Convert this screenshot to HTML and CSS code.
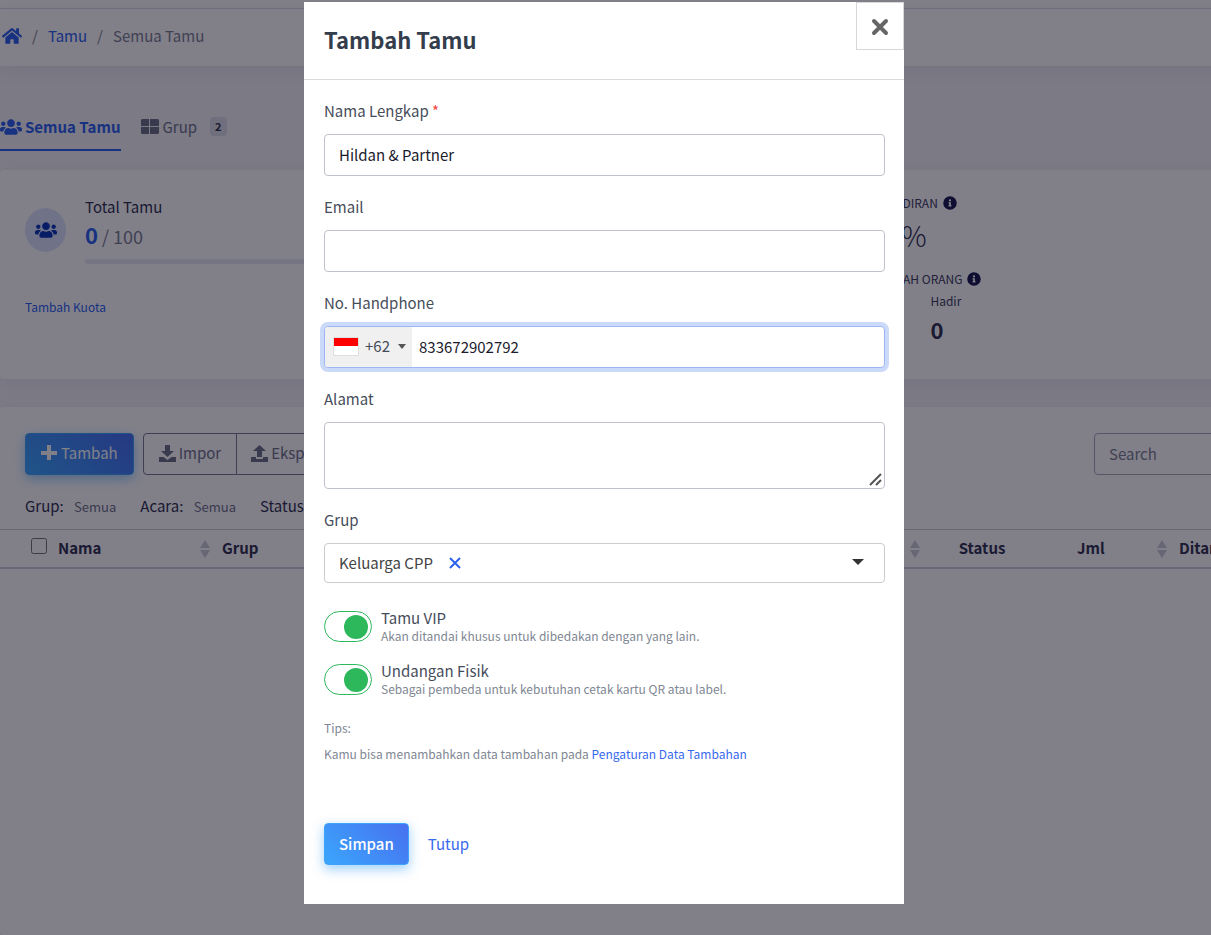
FILE: index.html
```html
<!DOCTYPE html>
<html lang="id">
<head>
  <meta charset="UTF-8" />
  <meta name="viewport" content="width=device-width, initial-scale=1.0" />
  <title>Tambah Tamu</title>
  <link rel="stylesheet" href="styles.css">
</head>
<body>
  <!-- icon dipakai ulang -->
  <svg class="sprite" aria-hidden="true">
    <symbol id="i-users" viewBox="0 0 640 512"><path d="M96 224c35 0 64-29 64-64s-29-64-64-64-64 29-64 64 29 64 64 64zm448 0c35 0 64-29 64-64s-29-64-64-64-64 29-64 64 29 64 64 64zm32 32h-64c-18 0-34 7-45 19 40 22 69 62 75 109h66c18 0 32-14 32-32v-32c0-35-29-64-64-64zm-256 0c62 0 112-50 112-112S382 32 320 32 208 82 208 144s50 112 112 112zm77 32h-8c-21 10-44 16-69 16s-48-6-69-16h-8c-64 0-115 52-115 115v29c0 27 21 48 48 48h288c27 0 48-21 48-48v-29c0-63-51-115-115-115zm-224-13c-11-12-27-19-45-19H64c-35 0-64 29-64 64v32c0 18 14 32 32 32h66c6-47 35-87 75-109z"/></symbol>
    <symbol id="i-info" viewBox="0 0 512 512"><path d="M256 8a248 248 0 1 0 0 496 248 248 0 0 0 0-496zm0 110a42 42 0 1 1 0 84 42 42 0 0 1 0-84zm56 254c0 7-5 12-12 12h-88c-7 0-12-5-12-12v-24c0-7 5-12 12-12h12v-64h-12c-7 0-12-5-12-12v-24c0-7 5-12 12-12h64c7 0 12 5 12 12v100h12c7 0 12 5 12 12z"/></symbol>
    <symbol id="i-sort" viewBox="0 0 10 18"><path d="M5 0l5 8H0zM5 18l5-8H0z"/></symbol>
  </svg>

  <div class="page">
    <div class="topbar"></div>
    <nav class="breadcrumb">
      <a href="#" aria-label="Beranda"><svg width="20" height="18" viewBox="0 0 576 512"><path d="M280 148L96 300v164c0 9 7 16 16 16l112-1c9 0 16-7 16-16v-95c0-9 7-16 16-16h64c9 0 16 7 16 16v95c0 9 7 16 16 16l112 1c9 0 16-7 16-16V300L296 148c-5-4-11-4-16 0zm292 103l-84-69V44c0-7-5-12-12-12h-56c-7 0-12 5-12 12v72l-90-73c-18-15-43-15-61 0L4 251c-5 4-6 12-2 17l26 31c4 5 12 6 17 2l235-194c5-3 11-3 16 0l235 194c5 4 13 3 17-2l26-31c4-5 3-13-2-17z"/></svg></a>
      <span>/</span>
      <a href="#">Tamu</a>
      <span>/</span>
      <span>Semua Tamu</span>
    </nav>

    <div class="tabs">
      <a href="#" class="tab active"><svg width="22" height="18"><use href="#i-users"/></svg>Semua Tamu</a>
      <a href="#" class="tab"><svg width="18" height="15" viewBox="0 0 18 15"><path d="M1 0h7v7H0V1zM9 0h8l1 1v6H9zM0 8h8v7H1l-1-1zM9 8h9v6l-1 1H9z"/></svg>Grup <span class="badge">2</span></a>
    </div>

    <section class="card summary">
      <div>
        <div class="quota">
          <span class="quota-icon"><svg width="22" height="18"><use href="#i-users"/></svg></span>
          <div class="quota-info">
            <div>Total Tamu</div>
            <div class="quota-count"><b>0</b> / 100</div>
            <div class="bar"></div>
          </div>
        </div>
        <a href="#" class="add-quota">Tambah Kuota</a>
      </div>
      <div class="stats">
        <div class="stat-title">KEHADIRAN <svg width="14" height="14"><use href="#i-info"/></svg></div>
        <div class="percent">00%</div>
        <div class="stat-title">JUMLAH ORANG <svg width="14" height="14"><use href="#i-info"/></svg></div>
        <div class="people">
          <div>Total<b>0</b></div>
          <div>Hadir<b>0</b></div>
        </div>
      </div>
    </section>

    <section class="card guests">
      <div class="toolbar">
        <button type="button" class="btn btn-primary"><svg width="16" height="16" viewBox="0 0 16 16"><path d="M6 0h4v6h6v4h-6v5H6v-5H0V6h6z"/></svg>Tambah</button>
        <div class="btn-group">
          <button type="button" class="btn"><svg width="17" height="17" viewBox="0 0 17 17"><path d="M6 0h5v6h4l-6.500 6L2 6h4zM0 12h4.500l4 3 4-3H17v5H0z"/></svg>Impor</button>
          <button type="button" class="btn"><svg width="17" height="17" viewBox="0 0 17 17"><path d="M6 12h5V6h4L8.500 0 2 6h4zM0 12h5v2h7v-2h5v5H0z"/></svg>Ekspor</button>
        </div>
        <input type="search" class="input search" placeholder="Search" aria-label="Search">
      </div>
      <div class="filters">
        <div>Grup: <a href="#">Semua</a></div>
        <div>Acara: <a href="#">Semua</a></div>
        <div>Status: <a href="#">Semua</a></div>
      </div>
      <table>
        <thead>
          <tr>
            <th class="c-check"><input type="checkbox" aria-label="Pilih semua"></th>
            <th class="c-name">Nama <svg class="sort"><use href="#i-sort"/></svg></th>
            <th>Grup <svg class="sort"><use href="#i-sort"/></svg></th>
            <th class="c-status">Status</th>
            <th class="c-jml">Jml <svg class="sort"><use href="#i-sort"/></svg></th>
            <th class="c-added">Ditambahkan</th>
          </tr>
        </thead>
      </table>
    </section>
  </div>

  <div class="backdrop">
    <div class="modal" role="dialog" aria-modal="true" aria-labelledby="modalTitle">
      <div class="modal-header">
        <h4 id="modalTitle">Tambah Tamu</h4>
        <button type="button" class="close" aria-label="Tutup dialog"><svg width="18" height="18" viewBox="0 0 18 18"><path d="M3 3l12 12M15 3L3 15"/></svg></button>
      </div>
      <form class="modal-body">
        <div class="group">
          <label for="nama">Nama Lengkap <span class="required">*</span></label>
          <input type="text" id="nama" class="input" value="Hildan &amp; Partner">
        </div>
        <div class="group">
          <label for="email">Email</label>
          <input type="email" id="email" class="input">
        </div>
        <div class="group">
          <label for="phone">No. Handphone</label>
          <div class="input phone">
            <button type="button" class="country" aria-label="Kode negara +62"><span class="flag"></span>+62<span class="caret"></span></button>
            <input type="tel" id="phone" value="833672902792">
          </div>
        </div>
        <div class="group">
          <label for="alamat">Alamat</label>
          <div class="area">
            <textarea id="alamat" class="input"></textarea>
            <svg class="grip" width="13" height="13" viewBox="0 0 13 13"><path d="M1 12L12 1M7 12l5-5"/></svg>
          </div>
        </div>
        <div class="group">
          <label for="grup">Grup</label>
          <div class="select">
            <select id="grup">
              <option>Keluarga CPP</option>
            </select>
            <button type="button" class="clear" aria-label="Hapus grup"><svg width="12" height="12" viewBox="0 0 12 12"><path d="M1 1l10 10M11 1L1 11"/></svg></button>
          </div>
        </div>

        <div class="switches">
          <div class="switch">
            <input type="checkbox" id="vip" checked>
            <label for="vip">Tamu VIP <small>Akan ditandai khusus untuk dibedakan dengan yang lain.</small></label>
          </div>
          <div class="switch">
            <input type="checkbox" id="fisik" checked>
            <label for="fisik">Undangan Fisik <small>Sebagai pembeda untuk kebutuhan cetak kartu QR atau label.</small></label>
          </div>
        </div>

        <div class="tips">
          <p>Tips:</p>
          <p>Kamu bisa menambahkan data tambahan pada <a href="#">Pengaturan Data Tambahan</a></p>
        </div>

        <div class="actions">
          <button type="submit" class="btn btn-primary">Simpan</button>
          <button type="button" class="btn-link">Tutup</button>
        </div>
      </form>
    </div>
  </div>
</body>
</html>
```
FILE: styles.css
```css
* { box-sizing: border-box; }
body {
  margin: 0;
  height: 100vh;
  overflow: hidden;
  font-family: "Noto Sans CJK SC", sans-serif;
  font-size: 15px;
  line-height: 22px;
  color: #323250;
  background: #fff;
}
a { color: #2c62ee; text-decoration: none; }
button, input, select, textarea { font: inherit; color: inherit; }
svg { fill: currentColor; flex-shrink: 0; }
.sprite { display: none; }

/* halaman di belakang modal, lebih lebar dari jendela */
.page { width: calc(100% + 109px); min-height: 100vh; background: #f2f2f6; display: flex; flex-direction: column; }
.topbar { height: 9px; background: #fff; border-bottom: 1px solid #dcdde8; }
.breadcrumb {
  display: flex;
  align-items: center;
  gap: 10px;
  height: 57px;
  padding: 0 2px 4px;
  background: #fff;
  color: #7d7f92;
  box-shadow: 0 2px 20px rgba(40, 40, 70, .08);
}
.breadcrumb svg { display: block; }
.tabs { display: flex; gap: 20px; height: 104px; padding-top: 46px; }
.tab { display: flex; align-items: center; gap: 4px; height: 39px; padding-bottom: 10px; color: #71728a; }
.tab.active { gap: 3px; padding-bottom: 8px; font-weight: bold; color: #2c62ee; border-bottom: 2px solid #2c62ee; }
.badge { margin-left: 9px; padding: 0 5px; border-radius: 4px; background: #dcdce6; color: #333348; font-size: 11px; font-weight: bold; line-height: 19px; }

.card { background: #fff; border-radius: 4px; box-shadow: 0 4px 20px rgba(40, 40, 70, .06); padding: 26px 25px; }
.summary { display: grid; grid-template-columns: 2fr 1fr; height: 209px; margin-bottom: 28px; }
.quota { display: flex; align-items: center; gap: 19px; }
.quota-icon { display: flex; align-items: center; justify-content: center; width: 41px; height: 44px; border-radius: 50%; background: #dde4fc; color: #0b3ab8; }
.quota-info { flex: 1; }
.quota-count { font-size: 18px; line-height: 33px; color: #7d7f92; }
.quota-count b { font-size: 22px; color: #2c62ee; }
.bar { width: 60%; height: 5px; margin-top: 6px; border-radius: 3px; background: #e9e9f2; }
.add-quota { display: inline-block; margin-top: 32px; font-size: 12px; }
.stats { line-height: 20px; }
.stat-title { display: flex; align-items: center; gap: 5px; font-size: 12px; line-height: 14px; color: #40405c; }
.stat-title svg { color: #1b1b50; }
.percent { margin: 4px 0 16px; font-size: 28px; font-weight: 300; line-height: 42px; }
.people { display: flex; gap: 31px; margin-top: 5px; font-size: 12px; color: #40405c; }
.people b { display: block; font-size: 22px; line-height: 36px; color: #323250; }

.guests { flex: 1; padding: 26px 0 0; }
.toolbar { display: flex; gap: 9px; padding: 0 25px; }
.btn {
  display: inline-flex;
  align-items: center;
  gap: 3px;
  height: 42px;
  padding: 0 15px 2px;
  border: 1px solid #7a7b92;
  border-radius: 4px;
  background: none;
  color: #71728a;
}
.btn-primary {
  gap: 4px;
  border-color: #3fa2fa;
  background: linear-gradient(45deg, #3ba6fc, #4770f0);
  color: #fff;
  box-shadow: 0 4px 12px rgba(60, 160, 250, .5);
}
.btn-group { display: flex; }
.btn-group .btn:first-child { border-radius: 4px 0 0 4px; }
.btn-group .btn + .btn { margin-left: -1px; padding-left: 14px; border-radius: 0 4px 4px 0; }
.input { display: block; width: 100%; height: 42px; padding: 0 14px 1px; border: 1px solid #bfc3cc; border-radius: 4px; background: #fff; outline: none; }
.search { width: 201px; margin-left: auto; border-color: #a9aabd; }
.search::placeholder { color: #7d7f92; }
.filters { display: flex; gap: 24px; height: 54px; padding: 20px 25px 0; }
.filters a { margin-left: 7px; font-size: 13px; color: #71728a; }
table { width: 100%; table-layout: fixed; border-collapse: collapse; }
th { height: 38px; padding: 0 2px 1px 10px; border-top: 1px solid #c9cad6; border-bottom: 2px solid #c9cad6; text-align: left; white-space: nowrap; }
th input { display: block; width: 16px; height: 16px; margin: 0 0 4px 31px; }
.sort { float: right; width: 10px; height: 18px; margin-top: 3px; color: #c9cad6; }
.c-check { width: 48px; padding: 0; }
.c-name { width: 164px; }
.c-status { width: 120px; padding: 0 0 1px; text-align: center; }
.c-jml { width: 127px; padding-left: 35px; }
.c-added { width: 151px; }

/* modal */
.backdrop { position: fixed; inset: 0; display: flex; justify-content: center; align-items: flex-start; padding: 2px 3px 0 0; background: rgba(4, 2, 20, .5); }
.modal { width: 600px; max-width: 100%; background: #fff; color: #464d5a; }
.modal a { color: #3869ee; }
.modal-header { display: flex; justify-content: space-between; height: 78px; padding-left: 20px; border-bottom: 1px solid #d8dadd; }
.modal-header h4 { margin: 0; font-size: 22px; line-height: 75px; color: #343d4b; }
.close { display: flex; align-items: center; justify-content: center; width: 48px; height: 48px; padding: 2px 0 0; border: 1px solid #d5d7db; background: #fff; }
.close svg { stroke: #666; stroke-width: 4; stroke-linecap: round; }
.modal-body { padding: 20px 19px 39px 20px; }
.group { margin-bottom: 20px; }
.group label { display: block; margin-bottom: 12px; }
.required { color: #f14646; }
.group .input { color: #1b1b2c; }
.group .phone { display: flex; padding: 0; border-color: #9bb6f7; box-shadow: 0 0 0 4px #ccdafa; }
.phone input { flex: 1; min-width: 0; padding: 0 7px; border: 0; background: none; outline: none; }
.country { display: flex; align-items: center; width: 87px; padding: 0 6px 2px 8px; border: 0; border-radius: 3px 0 0 3px; background: #f0f0f0; color: #464d5a; }
.flag { width: 26px; height: 19px; margin-right: 6px; border: 1px solid #ddd; border-radius: 1px; background: linear-gradient(#f00 50%, #fff 50%); }
.caret { margin-left: auto; border: 4px solid transparent; border-top: 5px solid #555; border-bottom: 0; }
.area { position: relative; }
.group textarea { height: 67px; padding: 8px 14px; resize: none; }
.grip { position: absolute; right: 3px; bottom: 3px; fill: none; stroke: #555; stroke-width: 2; }
.select { position: relative; }
.select::after { content: ""; position: absolute; right: 21px; top: 16px; border: 6px solid transparent; border-top-color: #333; border-bottom: 0; }
.select select { width: 100%; height: 40px; padding: 0 14px; border: 1px solid #ccc; border-radius: 4px; background: #fff; color: #444; appearance: none; }
.clear { position: absolute; left: 125px; top: 14px; display: flex; padding: 0; border: 0; background: none; }
.clear svg { stroke: #2c62ee; stroke-width: 2; }
.switches { display: grid; gap: 18px; margin-top: 26px; }
.switch { display: flex; align-items: center; gap: 9px; }
.switch input { display: flex; align-items: center; justify-content: flex-end; width: 48px; height: 31px; margin: 0; padding: 0 3px; border: 1px solid #2eb85c; border-radius: 16px; background: #fff; appearance: none; }
.switch input::before { content: ""; width: 24px; height: 24px; border-radius: 50%; background: #2eb85c; }
.switch input:not(:checked) { justify-content: flex-start; }
.switch label { line-height: 18px; }
.switch small { display: block; font-size: 12px; line-height: 17px; color: #808793; }
.tips { margin: 22px 0 60px; font-size: 12px; line-height: 18px; color: #808793; }
.tips p { margin: 0 0 8px; }
.actions { display: flex; align-items: center; gap: 19px; }
.actions .btn { padding: 0 14px 1px; font-weight: 500; }
.btn-link { padding: 0; border: 0; background: none; color: #3869ee; }
```
